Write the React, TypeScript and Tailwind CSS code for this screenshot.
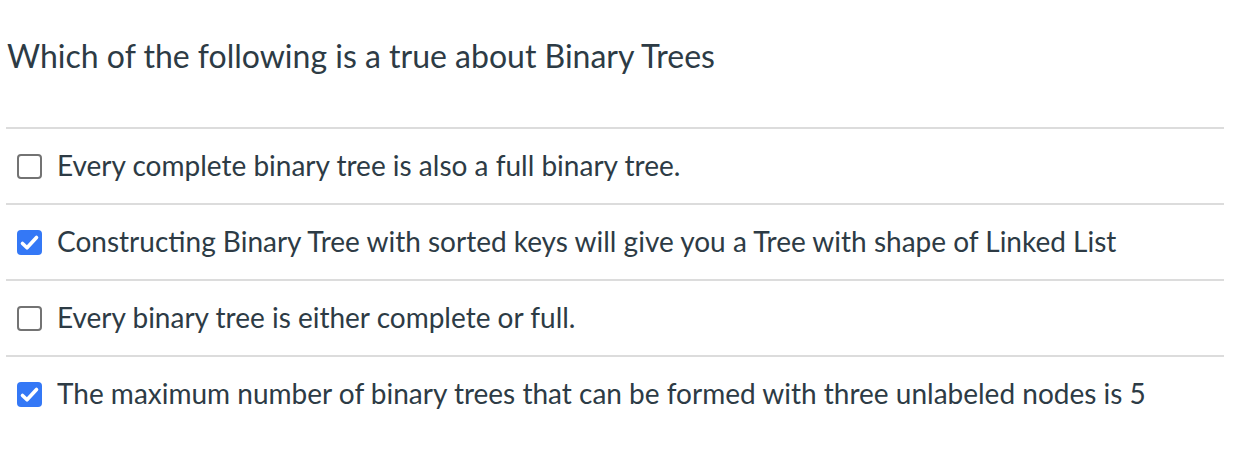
import React from 'react';

const answers = [
  { text: 'Every complete binary tree is also a full binary tree.', checked: false },
  { text: 'Constructing Binary Tree with sorted keys will give you a Tree with shape of Linked List', checked: true },
  { text: 'Every binary tree is either complete or full.', checked: false },
  { text: 'The maximum number of binary trees that can be formed with three unlabeled nodes is 5', checked: true },
];

function Box({ checked }: { checked: boolean }) {
  if (checked) {
    return (
      <span className="flex h-[25px] w-[25px] shrink-0 items-center justify-center rounded-[4px] bg-[#3478f6]">
        <svg width="25" height="25" viewBox="0 0 25 25" fill="none">
          <path d="M5.5 13.5 L10 17.8 L19.5 7.5" stroke="white" strokeWidth="3.6" strokeLinecap="round" strokeLinejoin="round" />
        </svg>
      </span>
    );
  }
  return <span className="h-[25px] w-[25px] shrink-0 rounded-[4px] border-2 border-[#737373] bg-white" />;
}

export default function App() {
  return (
    <div className="h-[464px] w-[1256px] bg-white font-['Lato','Open_Sans',sans-serif] text-[#2d3b45]">
      <div className="ml-[6px] w-[1218px]">
        <h1 className="h-[127px] pl-[1px] pt-[34px] text-[32px] leading-[44px] font-normal">
          Which of the following is a true about Binary Trees
        </h1>
        {answers.map((a, i) => (
          <div key={i} className="flex h-[76px] items-center gap-[15px] border-t-2 border-[#dcdcdc] pl-[11px]">
            <Box checked={a.checked} />
            <span className="-mt-[3px] text-[28px] leading-[36px]">{a.text}</span>
          </div>
        ))}
      </div>
    </div>
  );
}
